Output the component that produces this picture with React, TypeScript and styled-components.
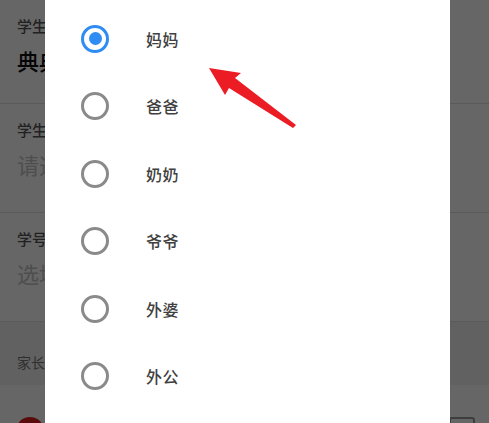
import React from "react";
import styled, { createGlobalStyle } from "styled-components";

const GlobalStyle = createGlobalStyle`
  html, body { margin: 0; padding: 0; }
  body {
    width: 489px;
    height: 423px;
    overflow: hidden;
    background: #ffffff;
    font-family: "Noto Sans CJK SC", "Noto Sans", sans-serif;
  }
`;

const Page = styled.div`
  position: relative;
  width: 489px;
  height: 423px;
  overflow: hidden;
  background: #ffffff;
`;

const Field = styled.div<{ $h: number }>`
  box-sizing: border-box;
  height: ${(p) => p.$h}px;
  padding: 16px 0 0 17px;
  border-bottom: 1px solid #e2e2e2;
  display: flex;
  flex-direction: column;
  gap: 9px;
`;

const FieldLabel = styled.div`
  font-size: 15px;
  line-height: 20px;
  font-weight: 500;
  color: #555555;
`;

const FieldValue = styled.div<{ $placeholder?: boolean }>`
  font-size: 22px;
  line-height: 30px;
  font-weight: ${(p) => (p.$placeholder ? 400 : 500)};
  color: ${(p) => (p.$placeholder ? "#c4c4c4" : "#111111")};
`;

const SectionHeader = styled.div`
  box-sizing: border-box;
  height: 63px;
  padding: 30px 0 0 17px;
  background: #f2f2f2;
  font-size: 14px;
  line-height: 20px;
  color: #777777;
`;

const ParentRow = styled.div`
  display: flex;
  align-items: flex-start;
  justify-content: space-between;
  padding: 32px 14px 0 16px;
`;

const Avatar = styled.div`
  width: 28px;
  height: 28px;
  border-radius: 50%;
  background: #e02020;
`;

const CheckBox = styled.div`
  width: 22px;
  height: 22px;
  border: 2px solid #999;
  border-radius: 3px;
`;

const Overlay = styled.div`
  position: absolute;
  inset: 0;
  background: rgba(0, 0, 0, 0.6);
`;

const Dialog = styled.div`
  position: absolute;
  top: 0;
  left: 45px;
  width: 405px;
  height: 460px;
  background: #ffffff;
  padding-top: 5px;
  box-sizing: border-box;
  display: flex;
  flex-direction: column;
`;

const Option = styled.div`
  display: flex;
  align-items: center;
  height: 67.5px;
  padding-left: 36px;
  gap: 37px;
`;

const Radio = styled.span<{ $checked?: boolean }>`
  box-sizing: border-box;
  width: 28px;
  height: 28px;
  border-radius: 50%;
  border: 3px solid ${(p) => (p.$checked ? "#2f8cf2" : "#8a8a8a")};
  display: flex;
  align-items: center;
  justify-content: center;
  flex-shrink: 0;
  &::after {
    content: "";
    display: ${(p) => (p.$checked ? "block" : "none")};
    width: 13px;
    height: 13px;
    border-radius: 50%;
    background: #2f8cf2;
  }
`;

const OptionText = styled.span`
  font-size: 16px;
  font-weight: 500;
  color: #404040;
  letter-spacing: 0.5px;
`;

const Arrow = styled.svg`
  position: absolute;
  left: 0;
  top: 0;
  pointer-events: none;
`;

const options = ["妈妈", "爸爸", "奶奶", "爷爷", "外婆", "外公"];

export default function App() {
  return (
    <Page>
      <GlobalStyle />
      <Field $h={104}>
        <FieldLabel>学生姓名</FieldLabel>
        <FieldValue>典典</FieldValue>
      </Field>
      <Field $h={109}>
        <FieldLabel>学生性别</FieldLabel>
        <FieldValue $placeholder>请选择</FieldValue>
      </Field>
      <Field $h={109}>
        <FieldLabel>学号</FieldLabel>
        <FieldValue $placeholder>选填</FieldValue>
      </Field>
      <SectionHeader>家长信息</SectionHeader>
      <ParentRow>
        <Avatar />
        <CheckBox />
      </ParentRow>
      <Overlay />
      <Dialog>
        {options.map((o, i) => (
          <Option key={o}>
            <Radio $checked={i === 0} />
            <OptionText>{o}</OptionText>
          </Option>
        ))}
      </Dialog>
      <Arrow width="489" height="423" viewBox="0 0 489 423">
        <polygon
          points="209,68 241,73 235,78 296,125 293,128 229,88 225,95"
          fill="#ec1c24"
        />
      </Arrow>
    </Page>
  );
}
